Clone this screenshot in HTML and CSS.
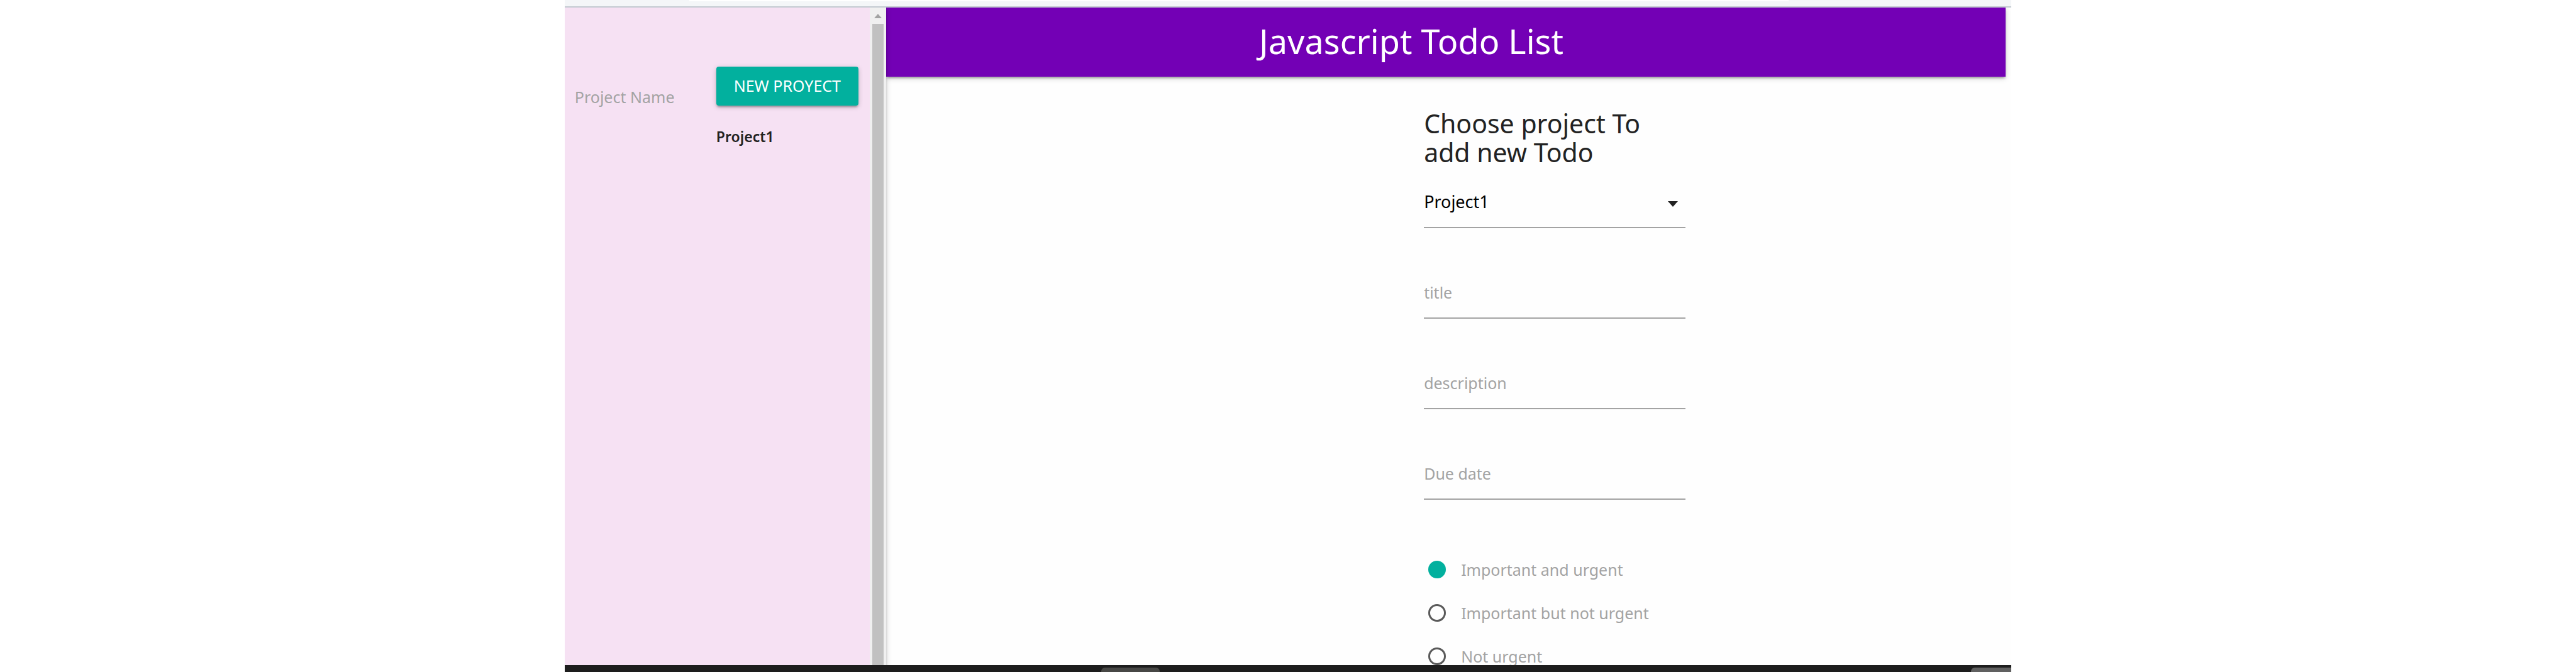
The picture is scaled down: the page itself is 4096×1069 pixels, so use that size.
FILE: index.html
```html
<!DOCTYPE html>
<html lang="en">
<head>
  <meta charset="utf-8">
  <meta name="viewport" content="width=device-width, initial-scale=1">
  <title>Javascript Todo List</title>
  <link rel="stylesheet" href="styles.css">
</head>
<body>
  <div class="window">
    <div class="toolbar"><div class="address"></div></div>
    <div class="app">
      <aside class="sidebar">
        <div class="projects">
          <input class="project-name" type="text" placeholder="Project Name" aria-label="Project Name">
          <div class="project-actions">
            <button class="btn" type="button">NEW PROYECT</button>
            <a class="project-link" href="#project1">Project1</a>
          </div>
        </div>
        <div class="scrollbar">
          <svg class="scroll-up" viewBox="0 0 12 7" aria-hidden="true"><path d="M6 0L12 7H0z"/></svg>
          <div class="thumb"></div>
        </div>
      </aside>
      <main class="main">
        <header class="navbar"><h1 class="brand">Javascript Todo List</h1></header>
        <form class="todo-form">
          <h2 class="form-title"><label for="project">Choose project To add new Todo</label></h2>
          <div class="select-wrap">
            <select class="field" id="project">
              <option>Project1</option>
            </select>
            <svg class="caret" viewBox="0 0 16 9" aria-hidden="true"><path d="M0 0H16L8 9z"/></svg>
          </div>
          <input class="field" type="text" placeholder="title" aria-label="title">
          <input class="field" type="text" placeholder="description" aria-label="description">
          <input class="field" type="text" placeholder="Due date" aria-label="Due date">
          <div class="priorities">
            <label class="option"><input class="radio" type="radio" name="priority" checked>Important and urgent</label>
            <label class="option"><input class="radio" type="radio" name="priority">Important but not urgent</label>
            <label class="option"><input class="radio" type="radio" name="priority">Not urgent</label>
          </div>
        </form>
      </main>
    </div>
    <footer class="taskbar">
      <div class="task"></div>
      <div class="task task-end"></div>
    </footer>
  </div>
</body>
</html>
```
FILE: styles.css
```css
* {
  box-sizing: border-box;
}

body {
  margin: 0;
  background: #fff;
  color: #222;
  font: 25px/40px "Noto Sans", "Open Sans", sans-serif;
}

.window {
  display: flex;
  flex-direction: column;
  width: 56.16%;
  height: 100vh;
  margin: 0 auto;
  overflow: hidden;
}

.toolbar {
  flex: none;
  height: 12px;
  background: #f4f6f8;
  border-bottom: 2px solid #c3cad1;
}

.address {
  width: 76%;
  height: 2px;
  margin-left: 198px;
  background: #fff;
}

.app {
  display: grid;
  grid-template-columns: 511px 1fr;
  flex: 1;
  min-height: 0;
  overflow: hidden;
}

/* Sidebar */

.sidebar {
  z-index: 1;
  display: grid;
  grid-template-columns: 1fr 26px;
  box-shadow: 0 3px 3px rgba(0, 0, 0, .14), 0 2px 9px rgba(0, 0, 0, .2);
}

.projects {
  display: grid;
  grid-template-columns: 225px 226px;
  align-items: start;
  padding: 94px 0 0 16px;
  background: #f6e1f3;
}

.project-name {
  width: 100%;
  height: 82px;
  margin-top: 7px;
  padding: 0;
  border: 0;
  background: transparent;
  font: inherit;
}

.project-actions {
  display: flex;
  flex-direction: column;
  gap: 29px;
}

.btn {
  height: 62px;
  padding: 0 0 2px;
  border: 0;
  border-radius: 4px;
  background: #02b09e;
  box-shadow: 0 3px 3px rgba(0, 0, 0, .14), 0 5px 2px -3px rgba(0, 0, 0, .12), 0 2px 9px rgba(0, 0, 0, .2);
  color: #fff;
  font: inherit;
}

.project-link {
  color: #222;
  font-size: 23px;
  font-weight: 600;
  text-decoration: none;
}

.scrollbar {
  display: flex;
  flex-direction: column;
  align-items: center;
  padding-top: 10px;
  background: #f0f0f0;
}

.scroll-up {
  width: 12px;
  height: 7px;
  margin-bottom: 9px;
  fill: #a3a3a3;
}

.thumb {
  flex: 1;
  width: 18px;
  background: #c1c1c1;
}

/* Main column */

.main {
  background: #fefefe;
}

.navbar {
  height: 110px;
  margin-right: 9px;
  padding: 0 110px 4px 0;
  background: #7300b5;
  box-shadow: 0 3px 3px rgba(0, 0, 0, .14), 0 5px 2px -3px rgba(0, 0, 0, .12), 0 2px 9px rgba(0, 0, 0, .2);
}

.brand {
  margin: 0;
  color: #fff;
  font-size: 54px;
  font-weight: 400;
  line-height: 106px;
  text-align: center;
}

.todo-form {
  width: 416px;
  margin: 51px 0 0 47.8%;
}

.form-title {
  margin: 0 0 16px;
  font-size: 41px;
  font-weight: 400;
  line-height: 46px;
}

.field {
  display: block;
  width: 100%;
  height: 82px;
  margin: 0 0 62px;
  padding: 0;
  border: 0;
  border-bottom: 2px solid #a3a3a3;
  border-radius: 0;
  outline: 0;
  background: transparent;
  font: inherit;
}

::placeholder {
  color: #a3a3a3;
  opacity: 1;
}

.select-wrap {
  display: grid;
  align-items: start;
}

.select-wrap > * {
  grid-area: 1 / 1;
}

select.field {
  appearance: none;
  color: #000;
  font-size: 27px;
}

.caret {
  justify-self: end;
  width: 16px;
  height: 9px;
  margin: 39px 12px 0 0;
  fill: #222;
  pointer-events: none;
}

.priorities {
  padding-top: 14px;
}

.option {
  display: flex;
  align-items: center;
  gap: 24px;
  height: 69px;
  padding-left: 7px;
  color: #a3a3a3;
}

.radio {
  appearance: none;
  width: 28px;
  height: 28px;
  margin: 0;
  border: 3px solid #5a5a5a;
  border-radius: 50%;
}

.radio:checked {
  border-color: #02b09e;
  background: #02b09e;
}

/* Desktop taskbar */

.taskbar {
  z-index: 2;
  display: flex;
  flex: none;
  height: 11px;
  padding-top: 4px;
  background: #1d1d1d;
}

.task {
  width: 93px;
  margin-left: 37.1%;
  border-radius: 6px 6px 0 0;
  background: #474745;
}

.task-end {
  width: 64px;
  margin-left: auto;
  border-radius: 6px 0 0 0;
  background: #606060;
}
```
